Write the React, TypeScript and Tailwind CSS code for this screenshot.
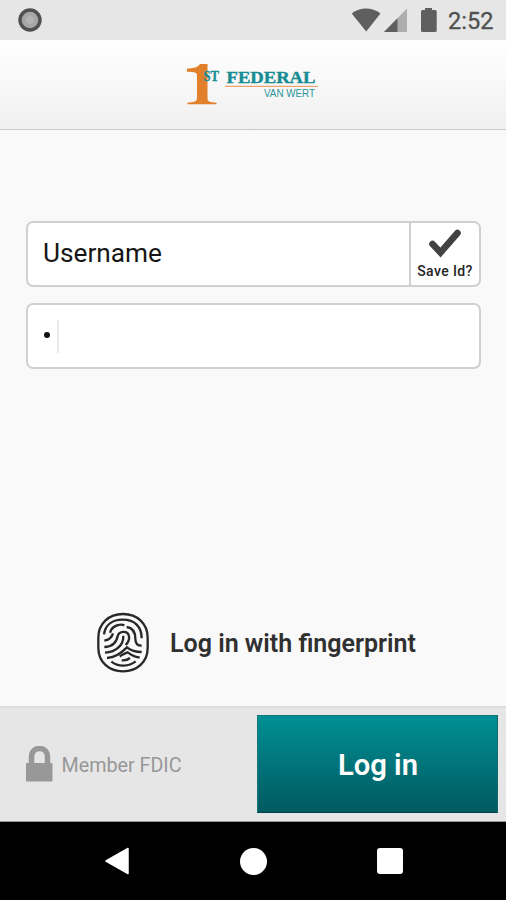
import React from "react";

function StatusBar() {
  return (
    <div className="flex h-10 shrink-0 items-center bg-[#e6e6e6] pl-[18px]">
      <svg width="24" height="24" viewBox="0 0 24 24">
        <circle cx="12" cy="12" r="10" fill="#a6a6a6" stroke="#505050" strokeWidth="3.4" />
        <circle cx="12" cy="12" r="4" fill="#b4b4b4" />
      </svg>
      <svg className="ml-[308px]" width="90" height="28" viewBox="350 6 90 28">
        <path d="M351.7 13.4C360 7 372 7 380.5 13.4L366.2 31.4Z" fill="#5f5f5f" />
        <path d="M407 8.5V32H384Z" fill="#adadad" />
        <path d="M397.5 18.2V32H384Z" fill="#5f5f5f" />
        <path d="M425 8h7v2h3.2q1.5 0 1.5 1.5V30.500q0 1.500-1.500 1.500H422.500q-1.500 0-1.500-1.500V11.500q0-1.500 1.500-1.500H425z" fill="#5f5f5f" />
      </svg>
      <svg className="ml-2" width="50" height="30" viewBox="448 5 50 30">
        <text x="448" y="28.700" fontSize="23.500" textLength="45.500" lengthAdjust="spacingAndGlyphs" fill="#505050" stroke="#505050" strokeWidth="0.300">2:52</text>
      </svg>
    </div>
  );
}

function Logo() {
  return (
    <svg width="136" height="48" viewBox="184 60 136 48">
      <path d="M187 68.500C194 68.500 198 67 200 64H207.500V98C207.500 101.500 209.500 102.500 216.500 102.700V104.300H187.500V102.700C194 102.500 197 101.500 197 98V75.500C197 72.500 195 71.700 187 71.700Z" fill="#e17f2b" />
      <g fill="#168c92" fontFamily='"Liberation Serif", serif' fontWeight="700">
        <text x="203.500" y="80.500" fontSize="14.500" stroke="#168c92" strokeWidth="0.300" textLength="15.500" lengthAdjust="spacingAndGlyphs">ST</text>
        <text x="226.500" y="83" fontSize="17.500" stroke="#168c92" strokeWidth="0.400" textLength="89" lengthAdjust="spacingAndGlyphs">FEDERAL</text>
      </g>
      <path d="M225 86.300H318" stroke="#eba56c" strokeWidth="1.300" />
      <text x="264" y="96.700" fontSize="10.800" textLength="51" lengthAdjust="spacingAndGlyphs" fill="#2b969d" fontFamily='"Liberation Sans", sans-serif'>VAN WERT</text>
    </svg>
  );
}

function Fingerprint() {
  return (
    <svg width="54" height="62" viewBox="30 35 162 186" fill="none" stroke="#282828" strokeWidth="7" strokeLinecap="butt">
      <path d="M111 41C68 41 37 70 37 112V142C37 185 69 213 111 213S185 185 185 142V112C185 70 154 41 111 41Z" />
      <path d="M54 102C58 73 80 58 110 58C146 58 167 79 167 114" />
      <path d="M55 121C67 119 77 112 81 99" />
      <path d="M72 97C75 85 84 77 97 74C104 72 109 72 115 75" />
      <path d="M122 80C142 83 148 96 148 115C148 130 155 136 167 136" />
      <path d="M55 140C80 140 91 126 95 108C98 91 126 89 129 108C131 121 124 129 119 134" />
      <path d="M112 106C113 134 91 155 57 157" />
      <path d="M63 173C90 172 108 156 123 141C135 151 148 155 167 155" />
      <path d="M101 168C111 163 118 158 125 156C136 164 147 171 161 171" />
      <path d="M76 184C99 202 129 198 149 183" />
      <path d="M107 180C116 181 126 178 132 173" />
    </svg>
  );
}

export default function App() {
  return (
    <div className="flex h-[900px] w-[506px] flex-col overflow-hidden bg-[#f9f9f9] font-[Roboto,sans-serif]">
      <StatusBar />
      <header className="flex h-[90px] shrink-0 justify-center border-b border-[#cacaca] bg-linear-to-b from-white to-[#f0f0f0] pt-5 pr-[2px]">
        <Logo />
      </header>

      <main className="flex flex-1 flex-col px-[26px] pt-[91px]">
        <div className="flex h-[66px] w-[455px] rounded-[7px] border-2 border-[#d0d0d0] bg-white">
          <div className="flex flex-1 items-center pl-[15px]">
            <svg width="122" height="36" viewBox="0 0 122 36">
              <text x="0" y="26" fontSize="26" textLength="119" lengthAdjust="spacingAndGlyphs" fill="#161616">Username</text>
            </svg>
          </div>
          <div className="flex w-[70px] flex-col items-center border-l-2 border-[#d0d0d0] pt-[5px]">
            <svg width="34" height="32" viewBox="0 0 34 32" fill="none" stroke="#424242" strokeWidth="6.600" strokeLinecap="round">
              <path d="M4.500 16L12.500 24.500L29.500 5" />
            </svg>
            <span className="mt-[3px] text-[14px] leading-4 font-medium tracking-[0.4px] whitespace-nowrap text-[#252525]">Save Id?</span>
          </div>
        </div>
        <div className="mt-4 flex h-[66px] w-[455px] items-center rounded-[7px] border-2 border-[#d0d0d0] bg-white pl-4">
          <span className="mt-[-2px] size-[6px] rounded-full bg-[#111]" />
          <span className="ml-[7px] h-[33px] w-[2px] bg-[#e9e9e9]" />
        </div>

        <div className="mt-[243px] flex items-center pl-[70px]">
          <Fingerprint />
          <svg className="ml-5" width="248" height="40" viewBox="170 623 248 40">
            <text x="170" y="652" fontSize="25" textLength="246" lengthAdjust="spacingAndGlyphs" fontWeight="600" fill="#303030">Log in with fingerprint</text>
          </svg>
        </div>
      </main>

      <footer className="flex h-[116px] shrink-0 items-center border-t-2 border-b border-t-[#dddddd] border-b-[#999999] bg-[#e6e6e6] pr-2 pb-[2px] pl-[26px]">
        <svg width="27" height="36" viewBox="0 0 27 36">
          <path d="M5.500 19V11C5.500-0.500 21.500-0.500 21.500 11V19" fill="none" stroke="#989898" strokeWidth="5.500" />
          <rect x="0" y="17" width="26.500" height="18.500" rx="1" fill="#989898" />
        </svg>
        <svg className="ml-2" width="124" height="30" viewBox="61 749 124 30">
          <text x="61.500" y="772" fontSize="20" textLength="120" lengthAdjust="spacingAndGlyphs" fill="#979797">Member FDIC</text>
        </svg>
        <button className="ml-auto flex h-[98px] w-[241px] items-center justify-center border border-t-[#15767a] border-r-[#15696c] border-b-[#024448] border-l-[#15767a] bg-linear-to-b from-[#009095] to-[#005a60]">
          <svg width="82" height="40" viewBox="0 0 82 40">
            <text x="1" y="31" fontSize="29" textLength="80" lengthAdjust="spacingAndGlyphs" fontWeight="600" fill="white">Log in</text>
          </svg>
        </button>
      </footer>

      <nav className="flex h-[78px] shrink-0 items-center bg-black pl-[104px]">
        <svg width="26" height="28" viewBox="0 0 26 28">
          <path d="M2 14L24 1.500V26.500Z" fill="white" stroke="white" strokeWidth="1.500" strokeLinejoin="round" />
        </svg>
        <span className="ml-[110px] size-[27px] rounded-full bg-white" />
        <span className="ml-[110px] size-[26px] rounded-[3px] bg-white" />
      </nav>
    </div>
  );
}
